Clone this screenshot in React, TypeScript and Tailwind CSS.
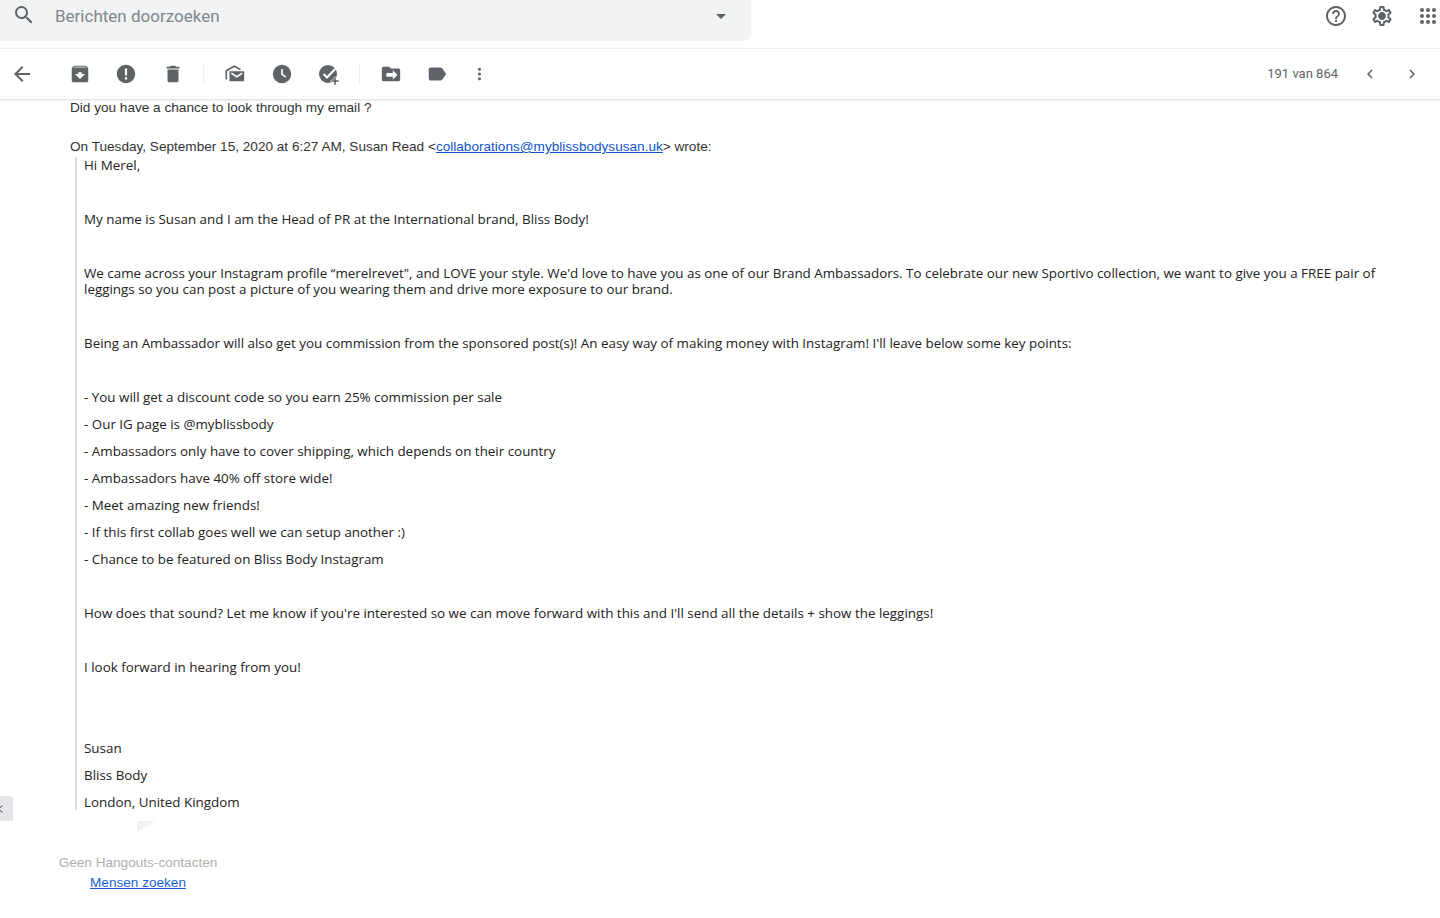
import React from "react";

const Ico = ({ d, className = "", size = 24, fill = "#5f6368" }: { d: string; className?: string; size?: number; fill?: string }) => (
  <svg width={size} height={size} viewBox="0 0 24 24" className={className} fill={fill}>
    <path d={d} />
  </svg>
);

const Tool = ({ children, className = "" }: { children: React.ReactNode; className?: string }) => (
  <div className={`w-[46px] h-6 flex items-center justify-center shrink-0 ${className}`}>{children}</div>
);

const Sep = () => <div className="w-px h-5 bg-[#eceded] shrink-0" />;

const lines: string[] = [
  "Hi Merel,",
  "",
  "My name is Susan and I am the Head of PR at the International brand, Bliss Body!",
  "",
  "We came across your Instagram profile “merelrevet\", and LOVE your style. We'd love to have you as one of our Brand Ambassadors. To celebrate our new Sportivo collection, we want to give you a FREE pair of leggings so you can post a picture of you wearing them and drive more exposure to our brand.",
  "",
  "Being an Ambassador will also get you commission from the sponsored post(s)! An easy way of making money with Instagram! I'll leave below some key points:",
  "",
  "- You will get a discount code so you earn 25% commission per sale",
  "- Our IG page is @myblissbody",
  "- Ambassadors only have to cover shipping, which depends on their country",
  "- Ambassadors have 40% off store wide!",
  "- Meet amazing new friends!",
  "- If this first collab goes well we can setup another :)",
  "- Chance to be featured on Bliss Body Instagram",
  "",
  "How does that sound? Let me know if you're interested so we can move forward with this and I'll send all the details + show the leggings!",
  "",
  "I look forward in hearing from you!",
  "",
  "",
  "Susan",
  "Bliss Body",
  "London, United Kingdom",
];

export default function App() {
  return (
    <div className="relative w-[1440px] h-[918px] overflow-hidden bg-white flex flex-col font-['Roboto',sans-serif]">
      {/* Top bar */}
      <header className="h-[49px] shrink-0 border-b border-[#f1f1f1] flex items-start justify-between">
        <div className="w-[751px] h-[41px] bg-[#f1f3f4] rounded-br-lg flex items-center">
          <Ico className="ml-3 mb-[11px]" d="M15.5 14h-.79l-.28-.27A6.47 6.47 0 0 0 16 9.5 6.5 6.5 0 1 0 9.5 16c1.61 0 3.09-.59 4.23-1.57l.27.28v.79l5 4.99L20.49 19l-4.99-5zm-6 0C7.01 14 5 11.99 5 9.5S7.01 5 9.5 5 14 7.01 14 9.5 11.99 14 9.5 14z" />
          <span className="ml-[19px] mb-[9px] text-[17px] text-[#80868b] leading-5">Berichten doorzoeken</span>
          <div className="ml-auto mr-[25px] mb-[9px] w-0 h-0 border-x-[5px] border-x-transparent border-t-[5px] border-t-[#5f6368]" />
        </div>
        <div className="flex items-center h-8 gap-[22px]">
          <Ico d="M11 18h2v-2h-2v2zm1-16C6.48 2 2 6.48 2 12s4.48 10 10 10 10-4.48 10-10S17.52 2 12 2zm0 18c-4.41 0-8-3.59-8-8s3.59-8 8-8 8 3.59 8 8-3.59 8-8 8zm0-14c-2.21 0-4 1.79-4 4h2c0-1.1.9-2 2-2s2 .9 2 2c0 2-3 1.75-3 5h2c0-2.25 3-2.5 3-5 0-2.21-1.79-4-4-4z" />
          <Ico d="M19.43 12.98c.04-.32.07-.64.07-.98s-.03-.66-.07-.98l2.11-1.65c.19-.15.24-.42.12-.64l-2-3.46c-.12-.22-.39-.3-.61-.22l-2.49 1c-.52-.4-1.08-.73-1.69-.98l-.38-2.65A.49.49 0 0 0 14 2h-4c-.25 0-.46.18-.49.42l-.38 2.65c-.61.25-1.17.59-1.69.98l-2.49-1c-.23-.09-.49 0-.61.22l-2 3.46c-.13.22-.07.49.12.64l2.11 1.65c-.04.32-.07.65-.07.98s.03.66.07.98l-2.11 1.65c-.19.15-.24.42-.12.64l2 3.46c.12.22.39.3.61.22l2.49-1c.52.4 1.08.73 1.69.98l.38 2.65c.03.24.24.42.49.42h4c.25 0 .46-.18.49-.42l.38-2.65c.61-.25 1.17-.59 1.69-.98l2.49 1c.23.09.49 0 .61-.22l2-3.46c.12-.22.07-.49-.12-.64l-2.11-1.65zM17.45 11.27c.04.31.05.52.05.73 0 .21-.02.43-.05.73l-.14 1.13.89.7 1.08.84-.7 1.21-1.27-.51-1.04-.42-.9.68c-.43.32-.84.56-1.25.73l-1.06.43-.16 1.13-.2 1.35h-1.4l-.19-1.35-.16-1.13-1.06-.43c-.43-.18-.83-.41-1.23-.71l-.91-.7-1.06.43-1.27.51-.7-1.21 1.08-.84.89-.7-.14-1.13c-.03-.31-.05-.54-.05-.74s.02-.43.05-.73l.14-1.13-.89-.7-1.08-.84.7-1.21 1.27.51 1.04.42.9-.68c.43-.32.84-.56 1.25-.73l1.06-.43.16-1.13.2-1.35h1.39l.19 1.35.16 1.13 1.06.43c.43.18.83.41 1.23.71l.91.7 1.06-.43 1.27-.51.7 1.21-1.07.85-.89.7.14 1.13zM12 8c-2.21 0-4 1.79-4 4s1.79 4 4 4 4-1.79 4-4-1.79-4-4-4z" />
          <svg width="24" height="24" viewBox="0 0 24 24" fill="#5f6368">
            {[4, 10, 16].flatMap((y) => [4, 10, 16].map((x) => <circle key={`${x}-${y}`} cx={x + 2} cy={y + 2} r="2" />))}
          </svg>
        </div>
      </header>

      {/* Toolbar */}
      <div className="h-[50px] shrink-0 flex items-center shadow-[0_1px_2px_rgba(60,64,67,0.2)] relative z-10 bg-white">
        <Ico className="ml-[10px] mr-[23px]" d="M20 11H7.83l5.59-5.59L12 4l-8 8 8 8 1.41-1.41L7.83 13H20v-2z" />
        <Tool><Ico size={22} d="M20.54 5.23l-1.39-1.68C18.88 3.21 18.47 3 18 3H6c-.47 0-.88.21-1.16.55L3.46 5.23C3.17 5.57 3 6.02 3 6.5V19c0 1.1.9 2 2 2h14c1.1 0 2-.9 2-2V6.5c0-.48-.17-.93-.46-1.27zM12 17.5L6.5 12H10v-2h4v2h3.5L12 17.5zM5.12 5l.81-1h12l.94 1H5.12z" /></Tool>
        <Tool><Ico size={22} d="M12 2C6.48 2 2 6.48 2 12s4.48 10 10 10 10-4.48 10-10S17.52 2 12 2zm1.2 16h-2.4v-2.4h2.4V18zm0-4.4h-2.4V6h2.4v7.6z" /></Tool>
        <Tool className="ml-px"><Ico size={22} d="M6 19c0 1.1.9 2 2 2h8c1.1 0 2-.9 2-2V7H6v12zM19 4h-3.5l-1-1h-5l-1 1H5v2h14V4z" /></Tool>
        <div className="w-[7px]" />
        <Sep />
        <div className="w-[8px]" />
        <Tool>
          <svg width="22" height="22" viewBox="0 0 24 24" fill="none">
            <path d="M2.5 18V8.5L11 3.5l7 3.5" stroke="#5f6368" strokeWidth="1.8" />
            <path d="M6 9h15a1 1 0 0 1 1 1v9a1 1 0 0 1-1 1H7a1 1 0 0 1-1-1V9z" fill="#5f6368" />
            <path d="M8 11l6 4 6-4" stroke="#fff" strokeWidth="1.8" />
          </svg>
        </Tool>
        <Tool className="ml-px">
          <svg width="20" height="20" viewBox="0 0 24 24">
            <circle cx="12" cy="12" r="11" fill="#5f6368" />
            <path d="M12 6v6.5l4.5 3" stroke="#fff" strokeWidth="2" fill="none" />
          </svg>
        </Tool>
        <Tool className="ml-px">
          <svg width="24" height="24" viewBox="0 0 24 24">
            <circle cx="11" cy="12" r="9" fill="#5f6368" />
            <path d="M6.5 12l3.5 3.5L21 4" stroke="#fff" strokeWidth="2" fill="none" />
            <path d="M19 15v3h3v2h-3v3h-2v-3h-3v-2h3v-3z" fill="#5f6368" stroke="#fff" strokeWidth=".5" />
          </svg>
        </Tool>
        <div className="w-[7px]" />
        <Sep />
        <div className="w-[8px]" />
        <Tool><Ico size={22} d="M20 6h-8l-2-2H4c-1.1 0-1.99.9-1.99 2L2 18c0 1.1.9 2 2 2h16c1.1 0 2-.9 2-2V8c0-1.1-.9-2-2-2zm-6 12v-3H7v-4h7V8l5 5-5 5z" /></Tool>
        <Tool><Ico size={22} d="M17.63 5.84C17.27 5.33 16.67 5 16 5L5 5.01C3.9 5.01 3 5.9 3 7v10c0 1.1.9 1.99 2 1.99L16 19c.67 0 1.27-.33 1.63-.84L22 12l-4.37-6.16z" /></Tool>
        <div className="w-[19px] h-6 flex items-center justify-center ml-[10px]">
          <Ico size={22} d="M12 8c1.1 0 2-.9 2-2s-.9-2-2-2-2 .9-2 2 .9 2 2 2zm0 2c-1.1 0-2 .9-2 2s.9 2 2 2 2-.9 2-2-.9-2-2-2zm0 6c-1.1 0-2 .9-2 2s.9 2 2 2 2-.9 2-2-.9-2-2-2z" />
        </div>
        <span className="ml-auto text-[13px] text-[#5f6368]">191 van 864</span>
        <Ico size={18} className="ml-[23px]" d="M15.41 7.41L14 6l-6 6 6 6 1.41-1.41L10.83 12z" />
        <Ico size={18} className="ml-6 mr-[19px]" d="M10 6L8.59 7.41 13.17 12l-4.58 4.59L10 18l6-6z" />
      </div>

      {/* Message */}
      <main className="h-[712px] shrink-0 overflow-hidden pl-[70px] pr-[50px] pt-px font-['Liberation_Sans',sans-serif] text-[13.6px] leading-4 text-[#333]">
        <p>Did you have a chance to look through my email ?</p>
        <p className="mt-[23px]">
          On Tuesday, September 15, 2020 at 6:27 AM, Susan Read &lt;<a className="text-[#1155cc] underline">collaborations@myblissbodysusan.uk</a>&gt; wrote:
        </p>
        <div className="ml-[5px] mt-[2px] border-l-2 border-[#dcdcdc] pl-[7px] font-['Open_Sans',sans-serif] text-[13.4px] text-[#222] h-[653px] overflow-hidden">
          {lines.map((t, i) => (
            <p key={i} className="mb-[11px] min-h-4">{t}</p>
          ))}
        </div>
      </main>

      {/* Hangouts footer */}
      <footer className="w-[276px] mt-[10px] flex flex-col items-center font-['Liberation_Sans',sans-serif] text-[13.6px] leading-5">
        <svg width="18" height="11" viewBox="0 0 18 11" className="ml-[16px]"><path d="M0 0h18L0 11z" fill="#f1f1f1" /></svg>
        <span className="mt-[21px] text-[#b0b0b0]">Geen Hangouts-contacten</span>
        <a className="text-[#1a5fd8] underline">Mensen zoeken</a>
      </footer>

      {/* Side-panel toggle */}
      <div className="absolute left-0 top-[796px] w-[13px] h-[25px] bg-[#e3e5e8] rounded-tr flex items-center">
        <svg width="5" height="8" viewBox="0 0 5 8" fill="none"><path d="M4 0.5L0 4l4 3.5" stroke="#444" strokeWidth="1" transform="translate(-1.5 0)" /></svg>
      </div>
    </div>
  );
}
